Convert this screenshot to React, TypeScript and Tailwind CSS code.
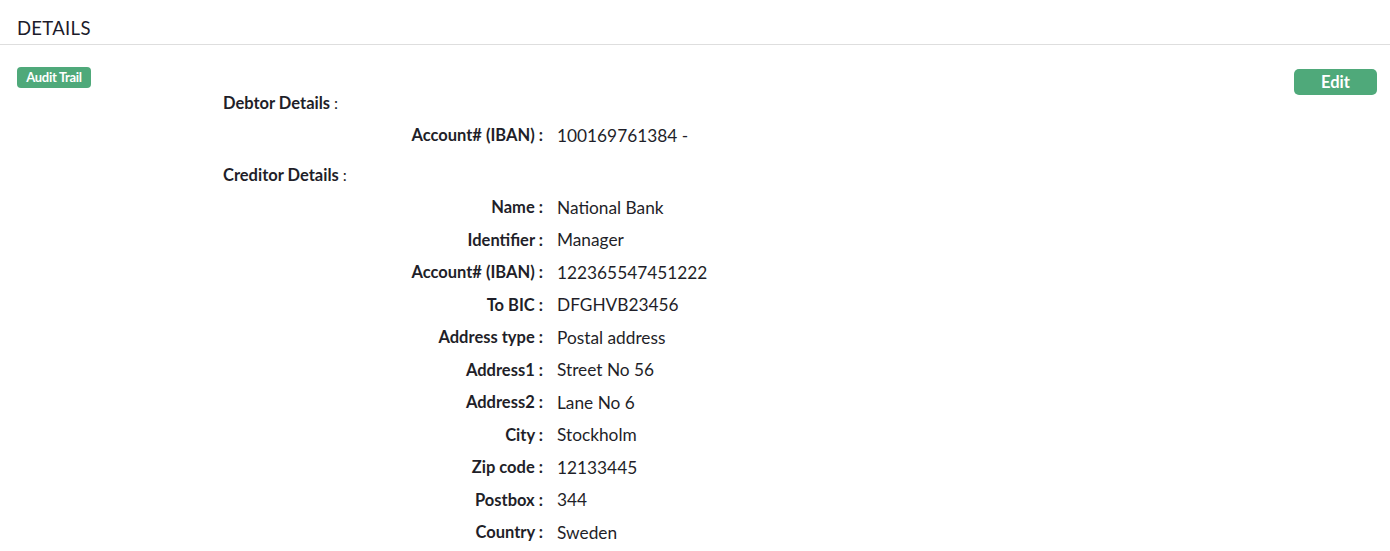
import React from "react";

type Row = { label: string; value: string };

const debtor: Row[] = [{ label: "Account# (IBAN)", value: "100169761384 -" }];

const creditor: Row[] = [
  { label: "Name", value: "National Bank" },
  { label: "Identifier", value: "Manager" },
  { label: "Account# (IBAN)", value: "122365547451222" },
  { label: "To BIC", value: "DFGHVB23456" },
  { label: "Address type", value: "Postal address" },
  { label: "Address1", value: "Street No 56" },
  { label: "Address2", value: "Lane No 6" },
  { label: "City", value: "Stockholm" },
  { label: "Zip code", value: "12133445" },
  { label: "Postbox", value: "344" },
  { label: "Country", value: "Sweden" },
];

function Heading({ title }: { title: string }) {
  return (
    <div className="h-[32.5px] flex items-center text-[16.5px]">
      <span className="font-bold">{title}</span>
      <span className="ml-[4px] text-[16px]">:</span>
    </div>
  );
}

function DetailRow({ row }: { row: Row }) {
  return (
    <div className="h-[32.5px] flex items-center">
      <div className="w-[320px] shrink-0 text-right font-bold text-[16.5px]">
        {row.label} :
      </div>
      <div className="pl-[14px] text-[17.3px]">{row.value}</div>
    </div>
  );
}

export default function App() {
  return (
    <div
      className="min-h-screen bg-white text-[#1f1f29]"
      style={{ fontFamily: "Lato, 'Open Sans', sans-serif" }}
    >
      <div className="h-[45px] border-b border-[#dedede] px-[17px] flex items-end pb-[1px]">
        <h2 className="text-[18.5px] font-normal tracking-[0.3px] text-[#1b1b2b]">DETAILS</h2>
      </div>

      <div className="flex">
        <div className="w-[223px] shrink-0 pl-[17px] pt-[22px]">
          <div className="flex items-center justify-center w-[74px] h-[21px] rounded-[4px] bg-[#4fa97a] text-white text-[13px] font-bold tracking-[-0.3px]">
            Audit Trail
          </div>
        </div>

        <div className="flex-1 pt-[42px]">
          <Heading title="Debtor Details" />
          {debtor.map((r) => (
            <DetailRow key={r.label} row={r} />
          ))}
          <div className="h-[7px]" />
          <Heading title="Creditor Details" />
          {creditor.map((r) => (
            <DetailRow key={r.label} row={r} />
          ))}
        </div>

        <div className="pr-[13px] pt-[24px]">
          <button className="w-[83px] h-[26px] rounded-[5px] bg-[#4fa97a] text-white text-[16.5px] font-bold">
            Edit
          </button>
        </div>
      </div>
    </div>
  );
}
